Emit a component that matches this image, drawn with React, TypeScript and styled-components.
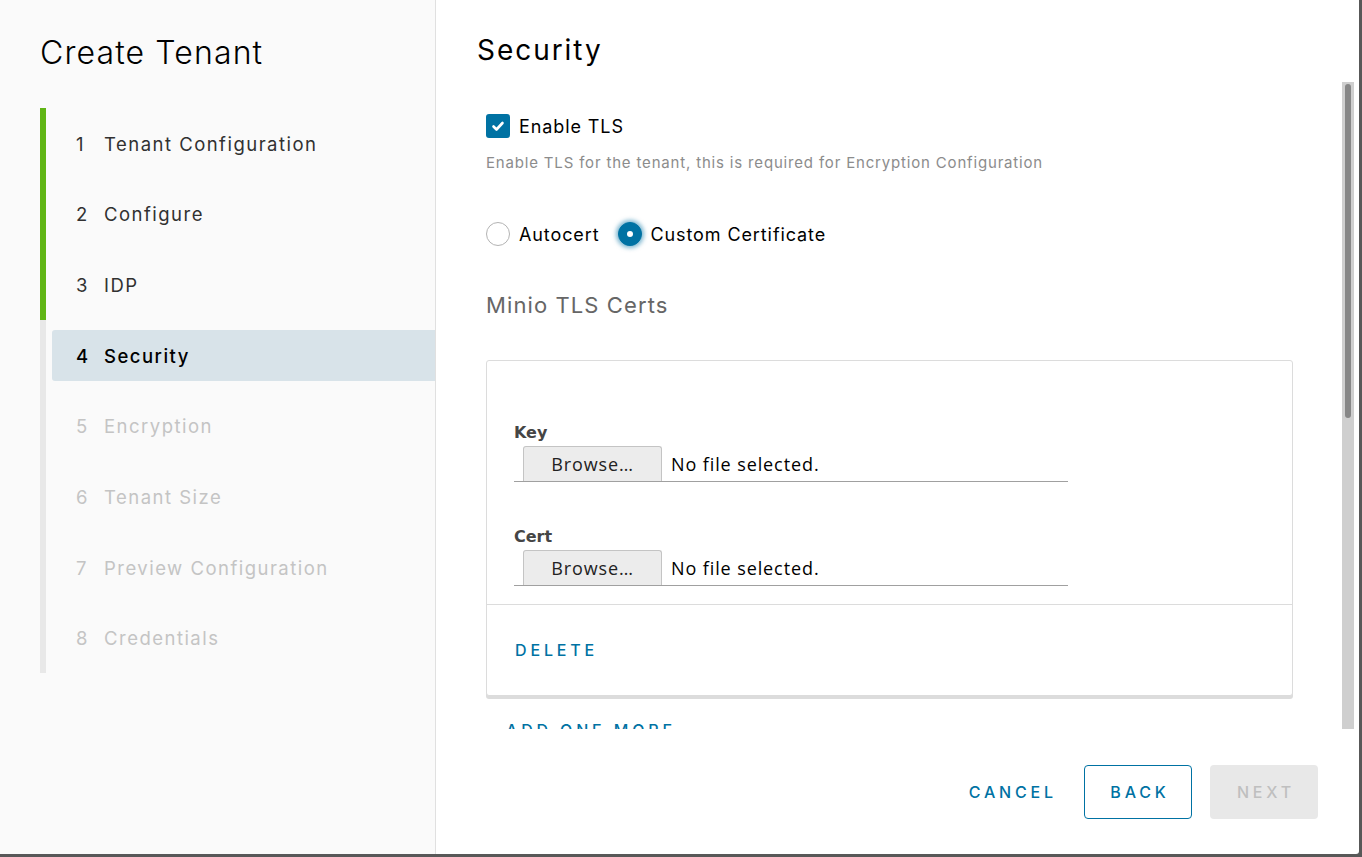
import React from 'react';
import styled, { createGlobalStyle } from 'styled-components';

const GlobalStyle = createGlobalStyle`
  html, body {
    margin: 0;
    padding: 0;
    height: 100%;
  }
  body {
    background: #585858;
    font-family: Inter, "Noto Sans", sans-serif;
    overflow: hidden;
  }
  * {
    box-sizing: border-box;
  }
`;

const Modal = styled.div`
  display: flex;
  width: 1359px;
  height: 854px;
  background: #fff;
  border-radius: 0 0 3px 0;
  overflow: hidden;
`;

const Sidebar = styled.aside`
  width: 436px;
  flex-shrink: 0;
  background: #fafafa;
  border-right: 1px solid #e0e0e0;
  padding: 33px 0 0 40px;
`;

const WizardTitle = styled.h1`
  margin: 0;
  font-size: 32px;
  line-height: 40px;
  font-weight: 300;
  letter-spacing: 0.035em;
  color: #000;
`;

const StepList = styled.ol`
  list-style: none;
  margin: 35px 0 0;
  padding: 0;
`;

type StepState = 'done' | 'active' | 'todo';

const Step = styled.li<{ $state: StepState }>`
  height: 70.625px;
  display: flex;
  padding: 10px 0 10px 6px;
  border-left: 6px solid ${(p) => (p.$state === 'done' ? '#60b515' : '#e8e8e8')};
`;

const StepInner = styled.div<{ $state: StepState }>`
  flex: 1;
  display: flex;
  align-items: center;
  padding: 1px 0 0 24px;
  border-radius: 3px 0 0 3px;
  background: ${(p) => (p.$state === 'active' ? '#d8e3e9' : 'transparent')};
  font-size: 18.5px;
  letter-spacing: 0.08em;
  font-weight: ${(p) => (p.$state === 'active' ? 500 : 400)};
  color: ${(p) => (p.$state === 'active' ? '#000' : p.$state === 'done' ? '#313131' : '#c4c4c4')};
`;

const StepNum = styled.span`
  width: 28px;
`;

const Main = styled.section`
  flex: 1;
  min-width: 0;
  display: flex;
  flex-direction: column;
`;

const Header = styled.header`
  height: 82px;
  flex-shrink: 0;
  padding: 32px 0 0 41px;
`;

const PageTitle = styled.h2`
  margin: 0;
  font-size: 28px;
  line-height: 36px;
  font-weight: 400;
  letter-spacing: 0.07em;
  color: #000;
`;

const ScrollFrame = styled.div`
  height: 647px;
  flex-shrink: 0;
  display: flex;
  margin-right: 5px;
`;

const ScrollBody = styled.div`
  flex: 1;
  min-width: 0;
  overflow-y: auto;
  scrollbar-width: none;
  padding: 32px 49px 90px 50px;

  &::-webkit-scrollbar {
    display: none;
  }
`;

const ScrollTrack = styled.div`
  width: 12px;
  flex-shrink: 0;
  background: #cfcfcf;
  padding: 2px 3px;
`;

const ScrollThumb = styled.div`
  height: 334px;
  border-radius: 3px;
  background: #878787;
`;

const CheckRow = styled.label`
  display: flex;
  align-items: center;
  gap: 9px;
  height: 24px;
  font-size: 18px;
  letter-spacing: 0.05em;
  color: #000;
`;

const CheckBox = styled.span`
  width: 24px;
  height: 24px;
  border-radius: 3px;
  background: #0072a3;
  display: flex;
  align-items: center;
  justify-content: center;
`;

const Helper = styled.p`
  margin: 15px 0 0;
  font-size: 15px;
  line-height: 20px;
  letter-spacing: 0.055em;
  color: #8c8c8c;
`;

const RadioGroup = styled.div`
  display: flex;
  align-items: center;
  gap: 18px;
  margin-top: 49px;
`;

const RadioItem = styled.label`
  display: flex;
  align-items: center;
  gap: 9px;
  font-size: 18px;
  letter-spacing: 0.05em;
  color: #000;
`;

const RadioCircle = styled.span<{ $checked?: boolean }>`
  width: 24px;
  height: 24px;
  border-radius: 50%;
  border: 1px solid ${(p) => (p.$checked ? '#0072a3' : '#b3b3b3')};
  background: ${(p) => (p.$checked ? '#0072a3' : '#fff')};
  box-shadow: ${(p) => (p.$checked ? '0 0 4px 2px rgba(0, 114, 163, 0.5)' : 'none')};
  display: flex;
  align-items: center;
  justify-content: center;

  &::after {
    content: '';
    display: ${(p) => (p.$checked ? 'block' : 'none')};
    width: 6px;
    height: 6px;
    border-radius: 50%;
    background: #fff;
  }
`;

const SectionTitle = styled.h3`
  margin: 45px 0 0;
  font-size: 22px;
  line-height: 28px;
  font-weight: 400;
  letter-spacing: 0.05em;
  color: #666;
`;

const Card = styled.div`
  margin-top: 41px;
  background: #fff;
  border: 1px solid #dcdcdc;
  border-radius: 3px;
  box-shadow: 0 3px 0 0 #dcdcdc;
`;

const CardBlock = styled.div`
  padding: 62px 27px 18px;
`;

const Field = styled.div<{ $first?: boolean }>`
  margin-top: ${(p) => (p.$first ? 0 : 45)}px;
`;

const FieldLabel = styled.div`
  font-family: "DejaVu Sans", sans-serif;
  font-weight: 700;
  font-size: 16px;
  line-height: 20px;
  color: #454545;
`;

const FileField = styled.div`
  margin-top: 3px;
  width: 554px;
  height: 36px;
  display: flex;
  align-items: flex-end;
  padding-left: 9px;
  border-bottom: 1px solid #a0a0a0;
  font-family: "Open Sans", sans-serif;
  font-size: 18px;
  letter-spacing: 0.05em;
`;

const BrowseButton = styled.span`
  width: 139px;
  height: 35px;
  display: flex;
  align-items: center;
  justify-content: center;
  background: #ececec;
  border: 1px solid #c4c4c4;
  border-bottom: none;
  border-radius: 3px 3px 0 0;
  color: #222;
`;

const FileName = styled.span`
  height: 35px;
  display: flex;
  align-items: center;
  margin-left: 9px;
  color: #000;
`;

const CardFooter = styled.div`
  height: 91px;
  display: flex;
  align-items: center;
  padding-left: 28px;
  border-top: 1px solid #dcdcdc;
`;

const LinkButton = styled.button`
  background: none;
  border: none;
  padding: 0;
  font-family: Inter, sans-serif;
  font-size: 16px;
  font-weight: 500;
  line-height: 20px;
  letter-spacing: 0.24em;
  color: #0072a3;
  cursor: pointer;
`;

const AddMore = styled(LinkButton)`
  margin: 24px 0 0 20px;
`;

const Footer = styled.footer`
  flex: 1;
  display: flex;
  align-items: center;
  justify-content: flex-end;
  gap: 18px;
  padding-right: 41px;
`;

const FooterButton = styled.button<{ $variant: 'flat' | 'outline' | 'disabled' }>`
  height: 54px;
  padding: 0 ${(p) => (p.$variant === 'flat' ? '8px' : '21px')} 0 ${(p) => (p.$variant === 'flat' ? '24px' : '25px')};
  border-radius: 4px;
  font-family: Inter, sans-serif;
  font-size: 16px;
  font-weight: 500;
  letter-spacing: 0.24em;
  border: 1px solid ${(p) => (p.$variant === 'outline' ? '#0072a3' : 'transparent')};
  background: ${(p) => (p.$variant === 'disabled' ? '#e8e8e8' : 'transparent')};
  color: ${(p) => (p.$variant === 'disabled' ? '#bfbfbf' : '#0072a3')};
  min-width: ${(p) => (p.$variant === 'flat' ? 'auto' : '108px')};
  cursor: ${(p) => (p.$variant === 'disabled' ? 'not-allowed' : 'pointer')};
`;

const steps = [
  'Tenant Configuration',
  'Configure',
  'IDP',
  'Security',
  'Encryption',
  'Tenant Size',
  'Preview Configuration',
  'Credentials',
];

const activeStep = 3;

const CertCard: React.FC<{ fields: string[] }> = ({ fields }) => (
  <Card>
    <CardBlock>
      {fields.map((f, i) => (
        <Field key={f} $first={i === 0}>
          <FieldLabel>{f}</FieldLabel>
          <FileField>
            <BrowseButton>Browse…</BrowseButton>
            <FileName>No file selected.</FileName>
          </FileField>
        </Field>
      ))}
    </CardBlock>
    <CardFooter>
      <LinkButton>DELETE</LinkButton>
    </CardFooter>
  </Card>
);

export default function App() {
  return (
    <>
      <GlobalStyle />
      <Modal>
        <Sidebar>
          <WizardTitle>Create Tenant</WizardTitle>
          <StepList>
            {steps.map((s, i) => {
              const state: StepState = i < activeStep ? 'done' : i === activeStep ? 'active' : 'todo';
              return (
                <Step key={s} $state={state}>
                  <StepInner $state={state}>
                    <StepNum>{i + 1}</StepNum>
                    {s}
                  </StepInner>
                </Step>
              );
            })}
          </StepList>
        </Sidebar>
        <Main>
          <Header>
            <PageTitle>Security</PageTitle>
          </Header>
          <ScrollFrame>
            <ScrollBody>
              <CheckRow>
                <CheckBox>
                  <svg width="24" height="24" viewBox="0 0 24 24">
                    <polyline points="7.5,12.5 10.5,15.5 16.5,9" fill="none" stroke="#fff" strokeWidth="2.6" strokeLinecap="round" strokeLinejoin="round" />
                  </svg>
                </CheckBox>
                Enable TLS
              </CheckRow>
              <Helper>Enable TLS for the tenant, this is required for Encryption Configuration</Helper>
              <RadioGroup>
                <RadioItem>
                  <RadioCircle />
                  Autocert
                </RadioItem>
                <RadioItem>
                  <RadioCircle $checked />
                  Custom Certificate
                </RadioItem>
              </RadioGroup>
              <SectionTitle>Minio TLS Certs</SectionTitle>
              <CertCard fields={['Key', 'Cert']} />
              <AddMore>ADD ONE MORE</AddMore>
              <SectionTitle>MinIO CA Certificates</SectionTitle>
              <CertCard fields={['Cert']} />
              <AddMore>ADD ONE MORE</AddMore>
            </ScrollBody>
            <ScrollTrack>
              <ScrollThumb />
            </ScrollTrack>
          </ScrollFrame>
          <Footer>
            <FooterButton $variant="flat">CANCEL</FooterButton>
            <FooterButton $variant="outline">BACK</FooterButton>
            <FooterButton $variant="disabled" disabled>
              NEXT
            </FooterButton>
          </Footer>
        </Main>
      </Modal>
    </>
  );
}
